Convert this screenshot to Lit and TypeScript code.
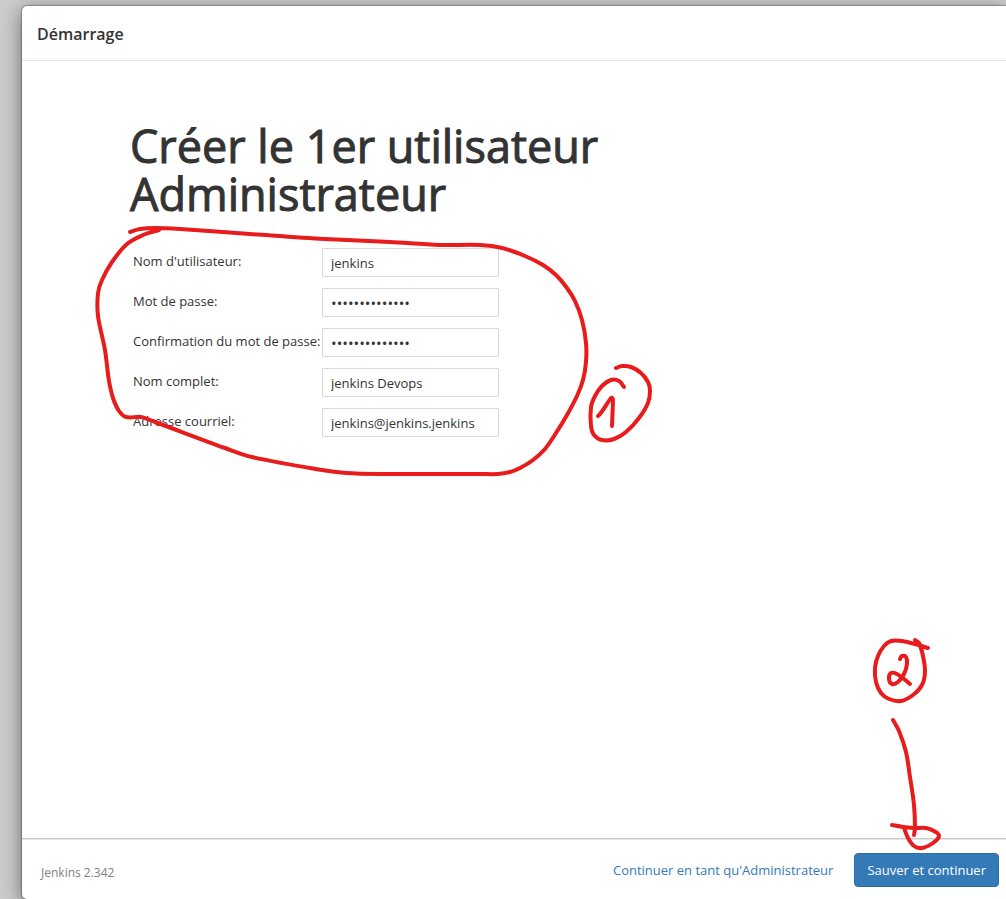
import { LitElement, html, svg, css } from "lit";
import { customElement } from "lit/decorators.js";

type Point = [number, number];

interface Field {
  id: string;
  label: string;
  type: string;
  value: string;
}

const FIELDS: Field[] = [
  { id: "username", label: "Nom d'utilisateur:", type: "text", value: "jenkins" },
  { id: "password1", label: "Mot de passe:", type: "password", value: "jenkinsjenkins" },
  { id: "password2", label: "Confirmation du mot de passe:", type: "password", value: "jenkinsjenkins" },
  { id: "fullname", label: "Nom complet:", type: "text", value: "jenkins Devops" },
  { id: "email", label: "Adresse courriel:", type: "text", value: "jenkins@jenkins.jenkins" },
];

// Pen strokes, each a list of points joined by a smooth curve.
const STROKES: Point[][] = [
  // Loop around the form
  [
    [130, 232], [140, 229], [155, 228], [180, 229], [250, 234], [325, 239], [390, 242], [440, 245], [480, 245],
    [502, 248], [525, 256], [543, 265], [556, 275], [567, 288], [575, 301], [582, 320], [586, 343], [586, 362],
    [583, 380], [577, 396], [567, 415], [556, 433], [545, 449], [533, 460], [520, 468], [510, 472], [498, 474],
    [480, 474], [380, 474], [346, 473], [322, 470], [252, 457], [225, 448], [155, 422], [141, 417], [126, 417],
    [119, 411], [113, 398], [109, 381], [105, 350], [98, 316], [98, 293], [102, 280], [112, 262], [127, 244],
    [143, 235], [159, 230],
  ],
  // Circle of the first mark
  [
    [616, 368], [622, 366], [631, 367], [641, 373], [648, 382], [650, 391], [648, 403], [639, 418], [626, 432],
    [614, 439], [602, 440], [594, 435], [591, 426], [591, 407], [595, 396], [602, 386], [611, 380], [619, 381],
    [624, 387],
  ],
  // Circle of the second mark
  [
    [928, 648], [915, 644], [902, 641], [891, 641], [884, 646], [878, 656], [875, 668], [876, 682], [881, 693],
    [889, 699], [901, 701], [913, 695], [922, 685], [925, 672], [923, 656], [919, 643], [915, 640],
  ],
  // Digit two
  [
    [900, 659], [902, 656], [906, 657], [907, 664], [904, 674], [898, 682], [892, 684], [889, 679], [891, 673],
    [897, 674], [904, 679], [910, 684],
  ],
  // Arrow shaft and head
  [[893, 720], [899, 731], [906, 752], [910, 777], [914, 805], [915, 828], [914, 835]],
  [
    [892, 825], [903, 827], [914, 828], [926, 828], [934, 831], [939, 836], [933, 843], [922, 848], [914, 846],
    [908, 838], [904, 828],
  ],
];

// Catmull-Rom spline written as cubic Bezier segments.
function smooth(points: Point[]): string {
  let d = `M${points[0][0]} ${points[0][1]}`;
  for (let i = 0; i < points.length - 1; i++) {
    const a = points[Math.max(i - 1, 0)];
    const b = points[i];
    const c = points[i + 1];
    const e = points[Math.min(i + 2, points.length - 1)];
    const len = Math.hypot(c[0] - b[0], c[1] - b[1]);
    const control = (p: Point, from: Point, to: Point, sign: number) => {
      const span = Math.hypot(to[0] - from[0], to[1] - from[1]) || 1;
      const k = (sign * len) / (3 * span);
      return `${(p[0] + (to[0] - from[0]) * k).toFixed(1)} ${(p[1] + (to[1] - from[1]) * k).toFixed(1)}`;
    };
    d += `C${control(b, a, c, 1)} ${control(c, b, e, -1)} ${c[0]} ${c[1]}`;
  }
  return d;
}

@customElement("app-root")
export class AppRoot extends LitElement {
  static styles = css`
    :host {
      display: block;
      position: relative;
      box-sizing: border-box;
      height: 100vh;
      padding: 6px 0 0 22px;
      overflow: hidden;
      background: #cccccc;
      color: #333333;
      font-family: "Open Sans", "Noto Sans", sans-serif;
      font-size: 13px;
      line-height: 20px;
    }
    .dialog {
      display: flex;
      flex-direction: column;
      height: 100%;
      box-sizing: border-box;
      background: #ffffff;
      border-radius: 5px 0 0 5px;
      box-shadow: 0 0 1px 1px rgba(0, 0, 0, 0.25), 0 5px 20px rgba(0, 0, 0, 0.5);
    }
    .header {
      padding: 17px 15px 14px;
      border-bottom: 1px solid #e5e5e5;
    }
    .title {
      margin: 0;
      font-size: 16px;
      font-weight: 600;
      line-height: 23px;
    }
    .body {
      flex: 1;
      padding: 61px 108px 0;
    }
    .heading {
      max-width: 540px;
      margin: 0 0 30px;
      font-size: 45px;
      font-weight: 500;
      line-height: 48px;
      -webkit-text-stroke: 1px #333333;
    }
    .form {
      display: grid;
      grid-template-columns: 186px 177px;
      gap: 11px 3px;
      padding-left: 3px;
    }
    .label {
      padding-top: 3px;
      white-space: nowrap;
    }
    .input {
      box-sizing: border-box;
      width: 100%;
      height: 29px;
      margin: 0;
      padding: 0 8px;
      border: 1px solid #d9d9d9;
      border-radius: 1px;
      background: #ffffff;
      color: #333333;
      font: inherit;
      outline: none;
    }
    .input[type="password"] {
      font-size: 15px;
    }
    .footer {
      display: flex;
      align-items: center;
      gap: 21px;
      height: 61px;
      box-sizing: border-box;
      padding: 2px 7px 0 19px;
      border-top: 1px solid #c8c8c8;
      box-shadow: inset 0 1px 0 #e5e5e5;
    }
    .version {
      flex: 1;
      padding-top: 5px;
      color: #808080;
      font-size: 12px;
    }
    .link {
      color: #337ab7;
      text-decoration: none;
    }
    .save {
      height: 34px;
      padding: 0 12px;
      border: 1px solid #2e6da4;
      border-radius: 4px;
      background: #337ab7;
      color: #ffffff;
      font: inherit;
      cursor: pointer;
    }
    .ink {
      position: absolute;
      top: 0;
      left: 0;
      pointer-events: none;
      fill: none;
      stroke: #e81c1c;
      stroke-width: 4;
      stroke-linecap: round;
      stroke-linejoin: round;
    }
  `;

  render() {
    return html`
      <main class="dialog">
        <header class="header"><h4 class="title">Démarrage</h4></header>
        <section class="body">
          <h1 class="heading">Créer le 1er utilisateur Administrateur</h1>
          <form class="form">
            ${FIELDS.map(
              (f) => html`
                <label class="label" for=${f.id}>${f.label}</label>
                <input class="input" id=${f.id} type=${f.type} .value=${f.value} autocomplete="off" spellcheck="false" />
              `
            )}
          </form>
        </section>
        <footer class="footer">
          <span class="version">Jenkins 2.342</span>
          <a class="link" href="#">Continuer en tant qu'Administrateur</a>
          <button class="save" type="button">Sauver et continuer</button>
        </footer>
      </main>
      <svg class="ink" width="1006" height="899" viewBox="0 0 1006 899" aria-hidden="true">
        ${STROKES.map((s) => svg`<path d=${smooth(s)} />`)}
        <path d="M598 416C602 413 607 403 611 398Q613 397 613 401L612 426" />
      </svg>
    `;
  }
}
